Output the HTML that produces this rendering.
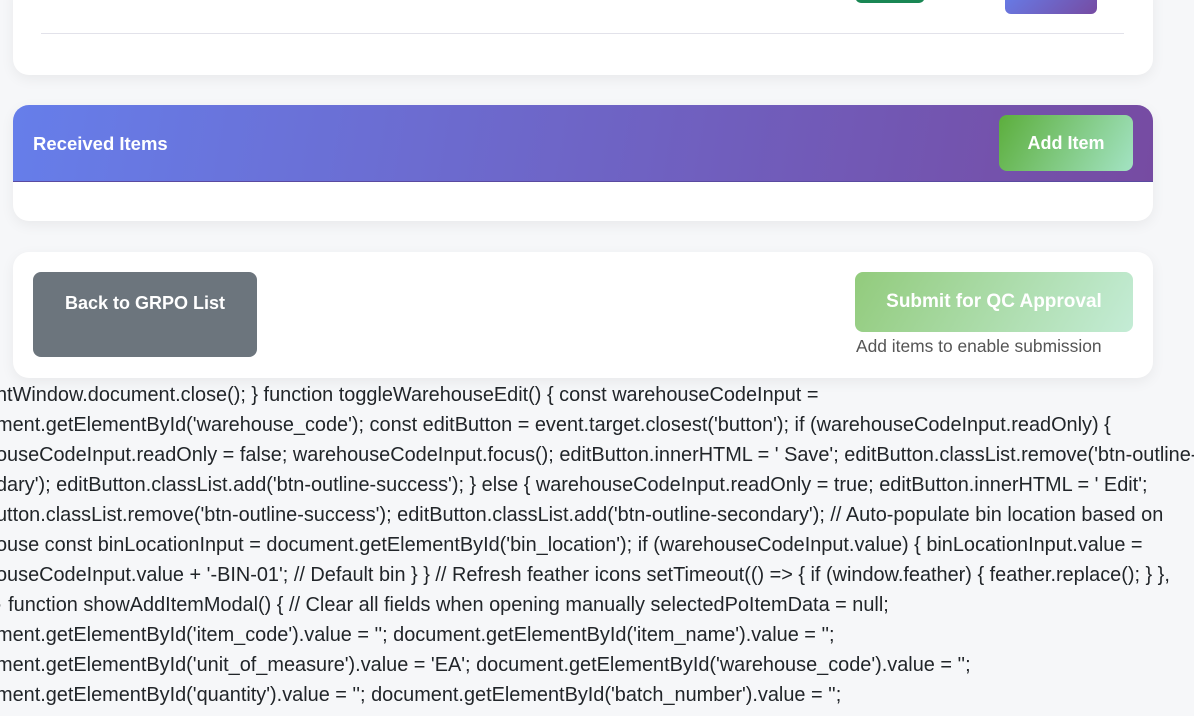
<!DOCTYPE html>
<html><head><style>
body{margin:0;width:1194px;height:716px;background:#f6f7f9;font-family:"Liberation Sans",sans-serif;overflow:hidden;position:relative}
.card{position:absolute;left:13px;width:1140px;background:#fff;border-radius:16px;box-shadow:0 4px 14px rgba(0,0,0,.06);overflow:hidden}
.btn{position:absolute;color:#fff;font-weight:bold;font-size:18px;display:flex;align-items:center;justify-content:center;border-radius:8px}
.code{position:absolute;left:0;top:380px;font-size:19.9px;line-height:30px;color:#212529;white-space:nowrap}
.code div{margin-left:-4px}
</style></head><body>
<div class="card" style="top:-20px;height:95px">
  <div style="position:absolute;left:28px;right:29px;top:53px;height:1px;background:#e2e2ea"></div>
</div>
<div style="position:absolute;left:855px;top:-10px;width:70px;height:13px;background:#198754;border-radius:8px"></div>
<div style="position:absolute;left:1005px;top:-10px;width:92px;height:24px;background:linear-gradient(135deg,#667eea,#764ba2);border-radius:6px"></div>

<div class="card" style="top:105px;height:116px">
  <div style="position:absolute;left:0;top:0;width:1140px;height:76px;background:linear-gradient(100deg,#667eea,#764ba2);border-bottom:1px solid #5a4aa0"></div>
  <div style="position:absolute;left:20px;top:28px;color:#fff;font-weight:bold;font-size:18.5px">Received Items</div>
  <div class="btn" style="left:986px;top:10px;width:134px;height:56px;background:linear-gradient(120deg,#5cae3c,#a3e3c3)">Add Item</div>
</div>

<div class="card" style="top:252px;height:126px">
  <div class="btn" style="left:20px;top:20px;width:224px;height:85px;background:#6c757d;padding-bottom:22px;box-sizing:border-box">Back to GRPO List</div>
  <div class="btn" style="left:842px;top:20px;width:278px;height:60px;background:linear-gradient(120deg,#92cb7c,#c4ecd6);font-size:19px">Submit for QC Approval</div>
  <div style="position:absolute;left:843px;top:84px;font-size:17.4px;color:#555">Add items to enable submission</div>
</div>

<div class="code">
<div>ntWindow.document.close(); } function toggleWarehouseEdit() { const warehouseCodeInput =</div>
<div>ment.getElementById('warehouse_code'); const editButton = event.target.closest('button'); if (warehouseCodeInput.readOnly) {</div>
<div>ouseCodeInput.readOnly = false; warehouseCodeInput.focus(); editButton.innerHTML = ' Save'; editButton.classList.remove('btn-outline-</div>
<div>dary'); editButton.classList.add('btn-outline-success'); } else { warehouseCodeInput.readOnly = true; editButton.innerHTML = ' Edit';</div>
<div>utton.classList.remove('btn-outline-success'); editButton.classList.add('btn-outline-secondary'); // Auto-populate bin location based on</div>
<div>ouse const binLocationInput = document.getElementById('bin_location'); if (warehouseCodeInput.value) { binLocationInput.value =</div>
<div>ouseCodeInput.value + '-BIN-01'; // Default bin } } // Refresh feather icons setTimeout(() =&gt; { if (window.feather) { feather.replace(); } },</div>
<div>· function showAddItemModal() { // Clear all fields when opening manually selectedPoItemData = null;</div>
<div>ment.getElementById('item_code').value = ''; document.getElementById('item_name').value = '';</div>
<div>ment.getElementById('unit_of_measure').value = 'EA'; document.getElementById('warehouse_code').value = '';</div>
<div>ment.getElementById('quantity').value = ''; document.getElementById('batch_number').value = '';</div>
</div>
</body></html>
